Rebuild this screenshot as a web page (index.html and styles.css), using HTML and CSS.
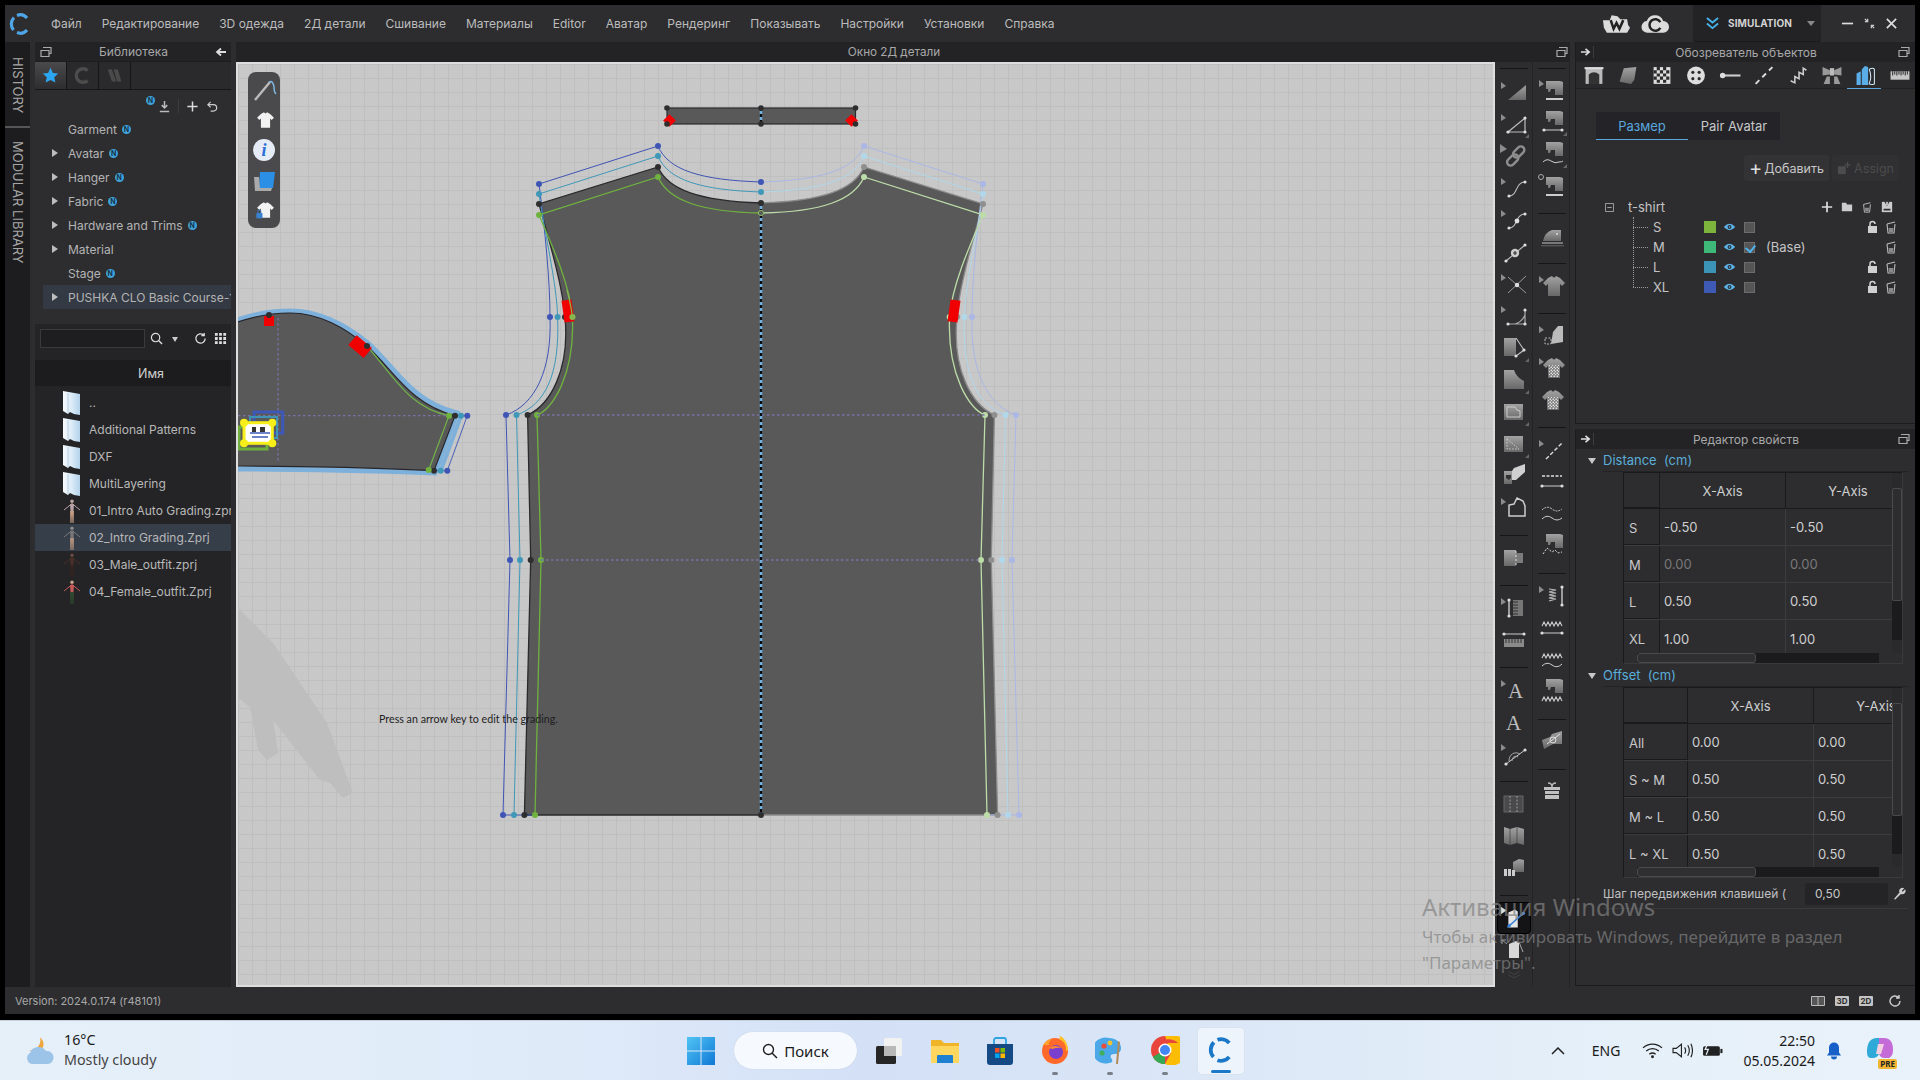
FILE: index.html
```html
<!DOCTYPE html>
<html lang="ru">
<head>
<meta charset="utf-8">
<title>CLO</title>
<link rel="stylesheet" href="styles.css">
</head>
<body>
<svg class="defs" aria-hidden="true">
  <defs>
    <linearGradient id="tg" x1="0" y1="0" x2="0" y2="1"><stop offset="0" stop-color="#a2a2a2"/><stop offset="1" stop-color="#686868"/></linearGradient>
    <linearGradient id="winb" x1="0" y1="0" x2="1" y2="1"><stop offset="0" stop-color="#52c4f4"/><stop offset="1" stop-color="#0f78d6"/></linearGradient>
    <linearGradient id="fold" x1="0" y1="0" x2="1" y2="0"><stop offset="0" stop-color="#f6fafd"/><stop offset=".5" stop-color="#dcecf8"/><stop offset="1" stop-color="#b4d2ea"/></linearGradient>
    <polygon id="fl" points="4,6 9,10 4,13" fill="#8c8c8c"/>
    <polygon id="fc" points="32,26 32,30 28,30" fill="#666"/>
    <path id="mg" d="M11 7h14l3 1v13h-8v-6h-4l-1 3h-2v-3h-2z" fill="url(#tg)"/>
    <path id="ts" d="M12 6l4-2q2 3 4 0l4 2 5 5-3 3-2-2v12H12V12l-2 2-3-3z"/>
    <g id="nd"><circle r="1.6" fill="#ddd"/></g>
    <symbol id="t-tri" viewBox="0 0 34 32"><use href="#fl"/><polygon points="11,24 29,24 29,9" fill="url(#tg)"/></symbol>
    <symbol id="t-triout" viewBox="0 0 34 32"><use href="#fl"/><path d="M11 24H28V10Z" fill="none" stroke="#bbb" stroke-width="1.2"/><use href="#nd" x="11" y="24"/><use href="#nd" x="28" y="24"/><use href="#nd" x="28" y="10"/><use href="#fc"/></symbol>
    <symbol id="t-link" viewBox="0 0 34 32"><polygon points="3,4 10,9 3,13" fill="#8c8c8c"/><g fill="none" stroke="#8e8e8e" stroke-width="2.400"><rect x="9" y="17" width="13" height="7" rx="3.500" transform="rotate(-45 15 20)"/><rect x="15" y="9" width="13" height="7" rx="3.500" transform="rotate(-45 21 12)"/></g></symbol>
    <symbol id="t-s" viewBox="0 0 34 32"><use href="#fl"/><path d="M12 24C21 24 18 10 28 10" fill="none" stroke="#bbb" stroke-width="1.100"/><use href="#nd" x="12" y="24"/><use href="#nd" x="28" y="10"/></symbol>
    <symbol id="t-s2" viewBox="0 0 34 32"><use href="#fl"/><path d="M12 24C21 24 18 10 28 10" fill="none" stroke="#bbb" stroke-width="1.100"/><use href="#nd" x="12" y="24"/><use href="#nd" x="28" y="10"/><circle cx="20" cy="17" r="2.400" fill="#ddd"/></symbol>
    <symbol id="t-plus" viewBox="0 0 34 32"><path d="M9 25L28 9" stroke="#bbb" stroke-width="1.100"/><use href="#nd" x="9" y="25"/><use href="#nd" x="28" y="9"/><circle cx="18" cy="17" r="4.200" fill="#ccc"/><path d="M16 17h4M18 15v4" stroke="#333" stroke-width="1.200"/></symbol>
    <symbol id="t-x" viewBox="0 0 34 32"><use href="#fl"/><path d="M11 25L29 8M11 9L29 25" stroke="#999" stroke-width="1"/><circle cx="20" cy="17" r="2.200" fill="#ddd"/></symbol>
    <symbol id="t-ang" viewBox="0 0 34 32"><use href="#fl"/><path d="M11 24H28V9M18 24C25 22 27 17 28 15" fill="none" stroke="#aaa" stroke-width="1.200"/><use href="#nd" x="11" y="24"/><use href="#nd" x="28" y="24"/><use href="#nd" x="28" y="10"/></symbol>
    <symbol id="t-fold" viewBox="0 0 34 32"><path d="M7 6H19V24H7Z" fill="url(#tg)"/><path d="M19 6L27 18L19 24" fill="none" stroke="#bbb" stroke-width="1.200"/><use href="#nd" x="27" y="18"/><use href="#nd" x="19" y="24"/><use href="#fc"/></symbol>
    <symbol id="t-notch" viewBox="0 0 34 32"><path d="M7 6H17C19 12 23 15 27 17V25H7Z" fill="url(#tg)"/><use href="#fc"/></symbol>
    <symbol id="t-box" viewBox="0 0 34 32"><rect x="7" y="8" width="19" height="16" fill="url(#tg)"/><path d="M10 11h8l2 3 3 1v6H10Z" fill="none" stroke="#ccc"/><use href="#fc"/></symbol>
    <symbol id="t-dot" viewBox="0 0 34 32"><rect x="7" y="8" width="19" height="16" fill="url(#tg)"/><path d="M10 11L22 21H10Z" fill="none" stroke="#ccc" stroke-dasharray="1.500 1.500"/><use href="#fc"/></symbol>
    <symbol id="t-shield" viewBox="0 0 34 32"><path d="M7 11H15V24H7Z" fill="url(#tg)"/><path d="M17 8L28 4V12L19 20H15V11Z" fill="#d0d0d0"/><path d="M9 15h5v3l-2 2-3-2z" fill="#333"/></symbol>
    <symbol id="t-out" viewBox="0 0 34 32"><use href="#fl"/><path d="M12 24V13l5-1 3-6 6 3 2 5v10Z" fill="none" stroke="#ccc" stroke-width="1.500"/></symbol>
    <symbol id="t-split" viewBox="0 0 34 32"><path d="M7 8H19V24H7Z" fill="url(#tg)"/><path d="M19 11H26V21H19Z" fill="#7b7b7b"/><path d="M19 9V24" stroke="#ddd" stroke-dasharray="2 2"/></symbol>
    <symbol id="t-rul" viewBox="0 0 34 32"><use href="#fl"/><path d="M12 8V24" stroke="#ccc" stroke-width="1.400"/><use href="#nd" x="12" y="8"/><use href="#nd" x="12" y="24"/><rect x="16" y="8" width="10" height="16" fill="#777"/><path d="M16 10h5M16 13h5M16 16h5M16 19h5M16 22h5" stroke="#333"/></symbol>
    <symbol id="t-mea" viewBox="0 0 34 32"><path d="M7 10H27" stroke="#ccc"/><use href="#nd" x="7" y="10"/><use href="#nd" x="27" y="10"/><rect x="7" y="15" width="20" height="8" fill="#8a8a8a"/><path d="M9 15v4M12 15v4M15 15v4M18 15v4M21 15v4M24 15v4" stroke="#333"/></symbol>
    <symbol id="t-A" viewBox="0 0 34 32"><use href="#fl"/><text x="11" y="24" class="sv-a">A</text></symbol>
    <symbol id="t-A2" viewBox="0 0 34 32"><text x="9" y="24" class="sv-a">A</text></symbol>
    <symbol id="t-arc" viewBox="0 0 34 32"><use href="#fl"/><path d="M9 26L28 12" stroke="#ccc"/><use href="#nd" x="9" y="26"/><use href="#nd" x="28" y="12"/><path d="M12 23C12 16 18 13 23 16M15 23C15 19 18 17 21 19" fill="none" stroke="#aaa"/></symbol>
    <symbol id="t-grid" viewBox="0 0 34 32"><rect x="7" y="8" width="19" height="16" fill="#4a4a4c" stroke="#666"/><path d="M13 8v16M20 8v16" stroke="#999" stroke-dasharray="2 1.500"/></symbol>
    <symbol id="t-folds" viewBox="0 0 34 32"><path d="M7 7l6 2v16l-6-2zM13 9l7-2v16l-7 2zM20 7l7 2v16l-7-2z" fill="url(#tg)"/><path d="M13 9v16M20 7v16" stroke="#333" stroke-width=".6"/></symbol>
    <symbol id="t-mix" viewBox="0 0 34 32"><path d="M16 10l6-3 5 1v12H16Z" fill="url(#tg)"/><path d="M7 17h3v7H7zM11 17h3v7h-3zM15 18h3v6h-3z" fill="#ccc"/></symbol>
    <symbol id="t-sel" viewBox="0 0 34 32"><polygon points="3,4 9,8 3,12" fill="#ddd"/><path d="M11 10l7-3 3 2v17H11Z" fill="#e6e6e6"/><path d="M10 26L28 10" stroke="#3d85d8" stroke-width="1.600"/><circle cx="12" cy="24" r="1.800" fill="#3d85d8"/><circle cx="27" cy="11" r="1.800" fill="#3d85d8"/></symbol>
    <symbol id="t-sel2" viewBox="0 0 34 32"><path d="M5 6L10 10M5 6h4M5 6v4" stroke="#999"/><path d="M12 10l7-3 3 2v15H12Z" fill="#d8d8d8"/><path d="M22 8l4 10" stroke="#aaa"/></symbol>
    <symbol id="t-chev" viewBox="0 0 34 32"><path d="M7 10l10 5 10-5M7 16l10 5 10-5" fill="none" stroke="#4c4c4c" stroke-width="1.200"/></symbol>
    <symbol id="m-1" viewBox="0 0 34 32"><use href="#fl"/><use href="#mg"/><rect x="11" y="24" width="17" height="2" fill="#ccc"/></symbol>
    <symbol id="m-2" viewBox="0 0 34 32"><use href="#mg" y="-2"/><path d="M9 24H27" stroke="#ccc"/><use href="#nd" x="9" y="24"/><use href="#nd" x="27" y="24"/><use href="#fc"/></symbol>
    <symbol id="m-3" viewBox="0 0 34 32"><use href="#mg" y="-3"/><path d="M8 24q4-4 8-1t8 1q3 0 4-1" fill="none" stroke="#ccc"/><use href="#fc"/></symbol>
    <symbol id="m-4" viewBox="0 0 34 32"><circle cx="6" cy="7" r="2.500" fill="none" stroke="#aaa"/><use href="#mg"/><rect x="11" y="24" width="17" height="2" fill="#ccc"/></symbol>
    <symbol id="m-iron" viewBox="0 0 34 32"><path d="M8 21q2-9 9-11h9v11z" fill="url(#tg)"/><circle cx="22" cy="14" r="1" fill="#ddd"/><rect x="7" y="22" width="21" height="2" fill="#777"/><rect x="6" y="25" width="23" height="1.400" fill="#555"/></symbol>
    <symbol id="m-sh" viewBox="0 0 34 32"><use href="#fl"/><use href="#ts" x="1" y="2" fill="url(#tg)"/></symbol>
    <symbol id="m-pt" viewBox="0 0 34 32"><use href="#fl"/><path d="M16 24l2-12 5-6h5v16z" fill="#bbb"/><path d="M10 18h6v6h-6z" fill="none" stroke="#bbb" stroke-dasharray="2 1.500"/></symbol>
    <symbol id="m-ck" viewBox="0 0 34 32"><use href="#fl"/><use href="#ts" x="1" y="2" fill="url(#tg)"/><rect x="14" y="13" width="10" height="12" fill="#ddd"/><path d="M14 15h10M14 18h10M14 21h10M14 24h10M16 13v12M19 13v12M22 13v12" stroke="#333" stroke-dasharray="1.500 1.500"/></symbol>
    <symbol id="m-ck2" viewBox="0 0 34 32"><use href="#ts" y="2" fill="url(#tg)"/><rect x="13" y="13" width="10" height="12" fill="#ddd"/><path d="M13 15h10M13 18h10M13 21h10M13 24h10M15 13v12M18 13v12M21 13v12" stroke="#333" stroke-dasharray="1.500 1.500"/></symbol>
    <symbol id="m-ln" viewBox="0 0 34 32"><use href="#fl"/><path d="M11 25L27 9" stroke="#ddd" stroke-width="1.400" stroke-dasharray="4 2"/></symbol>
    <symbol id="m-dd" viewBox="0 0 34 32"><path d="M7 10h20" stroke="#ddd" stroke-width="1.400" stroke-dasharray="3 1.500"/><path d="M7 20h20" stroke="#ccc"/><use href="#nd" x="7" y="20"/><use href="#nd" x="27" y="20"/></symbol>
    <symbol id="m-wv" viewBox="0 0 34 32"><path d="M7 12q5-5 10-1t10 0" fill="none" stroke="#ccc" stroke-dasharray="2 1"/><path d="M7 21q5-5 10-1t10 0" fill="none" stroke="#ccc"/></symbol>
    <symbol id="m-ma" viewBox="0 0 34 32"><use href="#mg" y="-3"/><path d="M8 24l4-6 5 4 3-2 3 3 4-1" fill="none" stroke="#ddd" stroke-dasharray="2 1.500"/></symbol>
    <symbol id="m-sp" viewBox="0 0 34 32"><use href="#fl"/><path d="M27 7V25" stroke="#ccc" stroke-width="1.400"/><use href="#nd" x="27" y="7"/><use href="#nd" x="27" y="25"/><path d="M14 9l7 1-7 2 7 1-7 2 7 1-7 2 7 1-7 2" fill="none" stroke="#bbb" stroke-width="1.200"/></symbol>
    <symbol id="m-sa" viewBox="0 0 34 32"><path d="M7 14l2-4 2 4 2-4 2 4 2-4 2 4 2-4 2 4 2-4 2 4" fill="none" stroke="#ccc" stroke-width="1.100"/><path d="M7 21H27" stroke="#ccc"/><use href="#nd" x="7" y="21"/><use href="#nd" x="27" y="21"/></symbol>
    <symbol id="m-sb" viewBox="0 0 34 32"><path d="M7 14l2-4 2 4 2-4 2 4 2-4 2 4 2-4 2 4 2-4 2 4" fill="none" stroke="#ccc" stroke-width="1.100"/><path d="M7 22q5-5 10-1t10-1" fill="none" stroke="#ccc"/></symbol>
    <symbol id="m-mz" viewBox="0 0 34 32"><use href="#mg" y="-4"/><path d="M7 25l2-4 2 4 2-4 2 4 2-4 2 4 2-4 2 4 2-4 2 4" fill="none" stroke="#ccc" stroke-width="1.100"/></symbol>
    <symbol id="m-tx" viewBox="0 0 34 32"><path d="M7 14l8-3 2-3 10-3v13H18l-9 5z" fill="url(#tg)"/><path d="M12 18L25 8" stroke="#ddd"/><circle cx="18" cy="14" r="3" fill="none" stroke="#ddd"/></symbol>
    <symbol id="m-gift" viewBox="0 0 34 32"><path d="M9 11h16v3H9zM10 15h14v3H10zM10 19h14v4H10zM17 11v12" fill="#c0c0c0"/><path d="M13 7q4 0 4 4q0-4 4-4" fill="none" stroke="#bbb" stroke-width="1.400"/></symbol>
    <symbol id="o-1" viewBox="0 0 20 20"><rect x="2" y="3" width="16" height="15" fill="#bbb"/><path d="M5 18v-9q5-4 10 0v9z" fill="#333"/><rect x="1" y="2" width="18" height="2" fill="#ddd"/></symbol>
    <symbol id="o-2" viewBox="0 0 20 20"><path d="M6 3l12-1-2 12-3 4-11-2z" fill="url(#tg)"/></symbol>
    <symbol id="o-3" viewBox="0 0 20 20"><rect x="2" y="2" width="16" height="16" fill="#ddd"/><path d="M2 5h3v3H2zM8 5h3v3H8zM14 5h3v3h-3zM5 8h3v3H5zM11 8h3v3h-3zM2 11h3v3H2zM8 11h3v3H8zM14 11h3v3h-3zM5 14h3v3H5zM11 14h3v3h-3zM5 2h3v3H5zM11 2h3v3h-3z" fill="#2b2b2b"/></symbol>
    <symbol id="o-4" viewBox="0 0 20 20"><circle cx="10" cy="10" r="8.500" fill="#ddd"/><g fill="#2b2b2b"><circle cx="7" cy="7" r="1.500"/><circle cx="13" cy="7" r="1.500"/><circle cx="7" cy="13" r="1.500"/><circle cx="13" cy="13" r="1.500"/></g></symbol>
    <symbol id="o-5" viewBox="0 0 20 20"><rect x="5" y="9" width="15" height="2" fill="#ccc"/><circle cx="3" cy="10" r="2.600" fill="#ddd"/></symbol>
    <symbol id="o-6" viewBox="0 0 20 20"><path d="M2 18L18 2" stroke="#ddd" stroke-width="1.800" stroke-dasharray="5 4"/></symbol>
    <symbol id="o-7" viewBox="0 0 20 20"><path d="M3 15l4 2 0-6 4 2 0-6 4 2 0-6 3 2" fill="none" stroke="#ccc" stroke-width="1.500"/></symbol>
    <symbol id="o-8" viewBox="0 0 20 20"><path d="M1 2l7 3v4l-7 1zM19 2l-7 3v4l7 1zM2 18l3-7h3v7zM18 18l-3-7h-3v7z" fill="#999"/><rect x="8" y="3" width="4" height="7" fill="#bbb"/></symbol>
    <symbol id="o-9" viewBox="0 0 20 20"><path d="M1 8l4-2v13H1zM6 4l3-3 3 1v17H6z" fill="#5aaee8"/><path d="M13 4q4-2 5 0v14q-3 1-5 0q3-7 0-14" fill="none" stroke="#cfe6f5"/></symbol>
    <symbol id="o-10" viewBox="0 0 20 20"><rect x="1" y="6" width="18" height="8" fill="#c6c6c6"/><path d="M3 6v4M5 6v3M7 6v4M9 6v3M11 6v4M13 6v3M15 6v4M17 6v3" stroke="#333"/></symbol>
    <symbol id="eye" viewBox="0 0 16 12"><path d="M1 6q7-8 14 0q-7 8-14 0z" fill="#5db4ea"/><circle cx="8" cy="6" r="2.400" fill="#2d2d30"/><circle cx="8" cy="6" r="1" fill="#5db4ea"/></symbol>
    <symbol id="lock" viewBox="0 0 12 14"><rect x="1" y="6" width="9" height="7" fill="#d0d0d0"/><path d="M3 6V4a2.500 2.500 0 0 1 5 0" fill="none" stroke="#d0d0d0" stroke-width="1.500"/></symbol>
    <symbol id="bin" viewBox="0 0 12 14"><path d="M2 4l8-2M2 4l1 9h6l1-9" fill="none" stroke="#bbb" stroke-width="1.100"/><path d="M3.600 8h4.800l-.4 4H4z" fill="#888"/></symbol>
    <symbol id="folder" viewBox="0 0 18 24" preserveAspectRatio="none"><path d="M0 0L17 3V24L11 23 7 21 5 23 0 20Z" fill="url(#fold)"/><path d="M5 2V22" stroke="#a8c4dc" stroke-width=".8"/></symbol>
    <symbol id="fig" viewBox="0 0 18 24"><circle cx="9" cy="2.200" r="1.800" fill="var(--head,#b9a09a)"/><path d="M9 4.500L1 11M9 4.500l8 6.500" stroke="var(--top,#b8a0a6)" stroke-width="1" fill="none"/><path d="M7 5h4l-.5 7h-3z" fill="var(--top,#b8a0a6)"/><path d="M7 12h4l-.4 12H9.500L9 15l-.5 9H7.400z" fill="var(--leg,#c09a80)"/></symbol>
    <g id="half">
      <path class="bf" d="M761 203C700 201 668 190 658 167L539 204C552 250 563 290 565 317C570 370 550 405 527.600 415L530.700 560L524.400 815H761Z"/>
      <path class="lk" d="M761 203C700 201 668 190 658 167L539 204C552 250 563 290 565 317C570 370 550 405 527.600 415L530.700 560L524.400 815H761"/>
      <path class="lb" d="M761 182C700 180 668 170 658 146L539 184C545 230 550 280 550 317C552 370 535 405 506 415L510 560L503 815H535"/>
      <path class="lt" d="M761 192C700 190 668 180 658 156L539 194C545 235 557 285 557.600 317C560 375 545 405 516.500 415L520 560L514 815"/>
      <path class="lg" d="M761 213C700 212 668 200 658 177L539 215C552 245 570 285 572.400 317C575 375 552 410 537 415L541 560L535 815"/>
      <g class="db"><circle cx="539" cy="184" r="3"/><circle cx="658" cy="146" r="3"/><circle cx="550" cy="317" r="3"/><circle cx="506" cy="415" r="3"/><circle cx="510" cy="560" r="3"/><circle cx="503" cy="815" r="3"/></g>
      <g class="dt"><circle cx="539" cy="194" r="3"/><circle cx="658" cy="156" r="3"/><circle cx="557.600" cy="317" r="3"/><circle cx="516.500" cy="415" r="3"/><circle cx="520" cy="560" r="3"/><circle cx="514" cy="815" r="3"/></g>
      <g class="dk"><circle cx="539" cy="204" r="3"/><circle cx="658" cy="167" r="3"/><circle cx="565" cy="317" r="3"/><circle cx="527.600" cy="415" r="3"/><circle cx="530.700" cy="560" r="3"/><circle cx="524.400" cy="815" r="3"/></g>
      <g class="dg"><circle cx="539" cy="215" r="3"/><circle cx="658" cy="177" r="3"/><circle cx="572.400" cy="317" r="3"/><circle cx="537" cy="415" r="3"/><circle cx="541" cy="560" r="3"/><circle cx="535" cy="815" r="3"/></g>
    </g>
  </defs>
</svg>

<div class="screen">
  <div class="app">
    <header class="menubar">
      <svg class="logo" viewBox="0 0 22 22"><g fill="none" stroke="#4ea6e6" stroke-width="3.200"><path d="M18 5A9 9 0 0 0 8 2.400"/><path d="M5 4.600A9 9 0 0 0 4.600 17"/><path d="M8 19.600A9 9 0 0 0 18 17"/></g></svg>
      <nav class="menu">
        <span>Файл</span><span>Редактирование</span><span>3D одежда</span><span>2Д детали</span><span>Сшивание</span><span>Материалы</span><span>Editor</span><span>Аватар</span><span>Рендеринг</span><span>Показывать</span><span>Настройки</span><span>Установки</span><span>Справка</span>
      </nav>
      <div class="mb-right">
        <svg class="mb-cloud" viewBox="0 0 30 22"><path d="M1 7h7l2-5 6 1 3 3h7l1 6 2 3-3 5H5l-3-5z" fill="#dcdcdc"/><path d="M9 7l3 9 3-6 3 6 4-9" fill="none" stroke="#222" stroke-width="2.600"/></svg>
        <svg class="mb-cloud2" viewBox="0 0 30 22"><path d="M7 20a6 6 0 0 1-1-12 9 9 0 0 1 17 0 6 6 0 0 1 0 12z" fill="#dcdcdc"/><path d="M20 9a6 6 0 1 0 0 6" fill="none" stroke="#222" stroke-width="2.600"/></svg>
        <div class="sim">
          <svg class="sim-ch" viewBox="0 0 14 14"><path d="M1 1l6 5 6-5M1 7l6 5 6-5" fill="none" stroke="#45b2ea" stroke-width="2"/></svg>
          <span class="sim-t">SIMULATION</span>
          <span class="sim-c"></span>
        </div>
        <div class="win">
          <svg viewBox="0 0 14 14"><path d="M1 7h12" stroke="#ddd" stroke-width="1.800"/></svg>
          <svg viewBox="0 0 14 14"><path d="M2 2l3 3M5 2v3H2M12 12L9 9M9 12V9h3" fill="none" stroke="#ccc" stroke-width="1.400"/></svg>
          <svg viewBox="0 0 14 14"><path d="M2 2l10 10M12 2L2 12" stroke="#ddd" stroke-width="1.800"/></svg>
        </div>
      </div>
    </header>

    <div class="workspace">
      <aside class="vtabs">
        <div class="vtab vt-a">HISTORY</div>
        <div class="vtab vt-b">MODULAR LIBRARY</div>
      </aside>

      <section class="library">
        <div class="phead lib-head">
          <svg class="pop" viewBox="0 0 12 12"><path d="M3 1.500h8v6H9M1 4.500h8v6H1z" fill="none" stroke="#aaa" stroke-width="1.200"/></svg>
          <span class="ptitle">Библиотека</span>
          <svg class="arr" viewBox="0 0 12 12"><path d="M11 6H3M6 2.500L2 6l4 3.500" fill="none" stroke="#ddd" stroke-width="1.800"/></svg>
        </div>
        <div class="lib-tabs">
          <div class="ltab on"><svg viewBox="0 0 20 20"><path d="M10 1l2.800 6 6.200.700-4.600 4.300 1.300 6.300L10 15.200l-5.700 3.100 1.300-6.300L1 7.700 7.200 7z" fill="#2da6f2"/></svg></div>
          <div class="ltab"><svg viewBox="0 0 20 20"><path d="M16 4A8 8 0 1 0 16 16" fill="none" stroke="#4c4c4c" stroke-width="4"/></svg></div>
          <div class="ltab"><svg viewBox="0 0 20 20"><path d="M2 3l5 0 5 14H7zM9 3h5l4 14h-5z" fill="#4a4a4a"/></svg></div>
        </div>
        <div class="lib-tools">
          <span class="nb nb-top">N</span>
          <svg viewBox="0 0 14 14"><path d="M7 1v7M4 5.500l3 3 3-3M2 12.500h10" fill="none" stroke="#bbb" stroke-width="1.600"/></svg>
          <span class="vl"></span>
          <svg viewBox="0 0 14 14"><path d="M7 1.500v11M1.500 7h11" stroke="#ddd" stroke-width="1.600"/></svg>
          <svg viewBox="0 0 14 14"><path d="M5 2L2 5l3 3M2 5h6a3.500 3.500 0 0 1 0 7H5" fill="none" stroke="#ccc" stroke-width="1.300"/></svg>
        </div>
        <ul class="lib-tree">
          <li><i></i>Garment<span class="nb">N</span></li>
          <li><i class="ar"></i>Avatar<span class="nb">N</span></li>
          <li><i class="ar"></i>Hanger<span class="nb">N</span></li>
          <li><i class="ar"></i>Fabric<span class="nb">N</span></li>
          <li><i class="ar"></i>Hardware and Trims<span class="nb">N</span></li>
          <li><i class="ar"></i>Material</li>
          <li><i></i>Stage<span class="nb">N</span></li>
          <li class="sel"><i class="ar"></i><span class="clip">PUSHKA CLO Basic Course-1</span></li>
        </ul>
        <div class="lib-lower">
          <div class="searchrow">
            <span class="sinput"></span>
            <svg viewBox="0 0 14 14"><circle cx="6" cy="6" r="4.500" fill="none" stroke="#ddd" stroke-width="1.300"/><path d="M9.500 9.500l3.500 3.500" stroke="#ddd" stroke-width="1.500"/></svg>
            <i class="dd"></i>
            <svg viewBox="0 0 14 14"><path d="M12 7a5 5 0 1 1-1.600-3.700M11 1v3H8" fill="none" stroke="#ddd" stroke-width="1.400"/></svg>
            <svg viewBox="0 0 14 14"><path d="M1 1h3v3H1zM5.500 1h3v3h-3zM10 1h3v3h-3zM1 5.500h3v3H1zM5.500 5.500h3v3h-3zM10 5.500h3v3h-3zM1 10h3v3H1zM5.500 10h3v3h-3zM10 10h3v3h-3z" fill="#ddd"/></svg>
          </div>
          <div class="colhead">Имя</div>
          <ul class="files">
            <li><svg><use href="#folder"/></svg><span>..</span></li>
            <li><svg><use href="#folder"/></svg><span>Additional Patterns</span></li>
            <li><svg><use href="#folder"/></svg><span>DXF</span></li>
            <li><svg><use href="#folder"/></svg><span>MultiLayering</span></li>
            <li><svg><use href="#fig"/></svg><span class="clip">01_Intro Auto Grading.zprj</span></li>
            <li class="sel"><svg class="f2"><use href="#fig"/></svg><span>02_Intro Grading.Zprj</span></li>
            <li><svg class="f3"><use href="#fig"/></svg><span>03_Male_outfit.zprj</span></li>
            <li><svg class="f4"><use href="#fig"/></svg><span>04_Female_outfit.Zprj</span></li>
          </ul>
        </div>
      </section>

      <section class="view">
        <div class="phead view-head">
          <span class="ptitle">Окно 2Д детали</span>
          <svg class="pop" viewBox="0 0 12 12"><path d="M3 1.500h8v6H9M1 4.500h8v6H1z" fill="none" stroke="#aaa" stroke-width="1.200"/></svg>
        </div>
        <div class="view-body">
          <div class="canvas">
            <svg class="pattern" viewBox="236 62 1259 925">
              <path class="ghost" d="M237 607L273 643L327 723L353 793L343 798L330 783L320 780L273 720L278 753L267 760L258 750L250 707L237 697Z"/>

              <path class="sl-blue" d="M238 320C255 314 275 311 290 311C320 311 347 326 369 344C397 370 412 402 457 413L435 473C380 471 300 469 238 469"/>
              <path class="body-fill" d="M238 322C255 316 275 313 290 313C320 313 345 328 367 346C395 372 410 404 455 415.700L434 470.700C380 468 300 466 238 466Z"/>
              <path class="sl-black" d="M238 322C255 316 275 313 290 313C320 313 345 328 367 346C395 372 410 404 455 415.700L434 470.700C380 468 300 466 238 466"/>
              <path class="sl-green" d="M367 346C395 378 410 408 449 415.700L428.700 470"/>
              <path class="sl-tt" d="M461 415.700L440.700 470.700"/>
              <path class="sl-tl" d="M455 415.700H467.300L447.300 470.700H434"/>
              <path class="hdash" d="M238 415.700H449M278 318V463"/>
              <rect class="red" x="264" y="316" width="10" height="10"/>
              <rect class="red" x="350" y="340" width="20" height="13" transform="rotate(40 360 346.700)"/>
              <rect class="sq-b" x="254" y="412" width="28.700" height="21"/>
              <rect class="sq-t" x="250" y="417" width="27" height="21"/>
              <rect class="sq-g" x="239" y="427" width="28" height="22"/>
              <rect class="sq-y" x="244" y="422.700" width="28.300" height="20.600"/>
              <path class="sq-in" d="M252 427h4v5h-4zM260 427h5v5h-5z"/>
              <path class="sq-blue" d="M250 433H270M252 437H268"/>
              <g class="yd"><circle cx="244" cy="422.700" r="4"/><circle cx="272.300" cy="422.700" r="4"/><circle cx="244" cy="443.300" r="4"/><circle cx="272.300" cy="443.300" r="4"/></g>
              <g class="dk"><circle cx="269" cy="315" r="3"/><circle cx="367" cy="346" r="3"/><circle cx="455" cy="415.700" r="3"/><circle cx="434" cy="470.700" r="3"/></g>
              <g class="dg"><circle cx="449" cy="415.700" r="3"/><circle cx="428.700" cy="470" r="3"/></g>
              <g class="dt"><circle cx="461" cy="415.700" r="3"/><circle cx="440.700" cy="470.700" r="3"/></g>
              <g class="db"><circle cx="467.300" cy="415.700" r="3"/><circle cx="447.300" cy="470.700" r="3"/></g>

              <g class="pal-r"><use href="#half" transform="translate(1522 0) scale(-1 1)"/></g>
              <g class="pal-l"><use href="#half"/></g>
              <path class="hdash" d="M537 415H985M541 560H981"/>
              <rect class="red" x="563" y="300" width="10" height="22" transform="rotate(-8 568 311)"/>
              <rect class="red" x="949" y="300" width="10" height="22" transform="rotate(8 954 311)"/>
              <path class="sm-g" d="M567 290Q571 305 572.400 317"/>
              <circle class="dt-g" cx="572.400" cy="317" r="3"/>
              <path class="cl-blue" d="M761 203V815"/>
              <path class="cl-black" d="M761 203V815"/>
              <g class="dk"><circle cx="761" cy="203" r="3"/><circle cx="761" cy="815" r="3"/></g>
              <circle class="db-s" cx="761" cy="182" r="3"/>
              <circle class="dt-s" cx="761" cy="192" r="3"/>
              <circle class="dg-o" cx="761" cy="213" r="2.600"/>

              <rect class="collar" x="667" y="108" width="188.500" height="16"/>
              <path class="cl-blue" d="M761 108V124"/>
              <path class="cl-black" d="M761 108V124"/>
              <rect class="red" x="665" y="116" width="9" height="9" transform="rotate(45 669.500 120.500)"/>
              <rect class="red" x="847" y="116" width="9" height="9" transform="rotate(45 851.500 120.500)"/>
              <g class="dk"><circle cx="667" cy="108" r="2.800"/><circle cx="855.500" cy="108" r="2.800"/><circle cx="667" cy="124" r="2.800"/><circle cx="855.500" cy="124" r="2.800"/><circle cx="761" cy="108" r="2.800"/><circle cx="761" cy="124" r="2.800"/></g>
              <text class="tip" x="379" y="723">Press an arrow key to edit the grading.</text>
            </svg>
            <div class="pill">
              <svg viewBox="0 0 26 26"><path d="M4 23L19 5" stroke="#bbb" stroke-width="2.400"/><path d="M18 5q4-2 5 5 0 5 2 7" fill="none" stroke="#7db7e2" stroke-width="1.500"/></svg>
              <svg viewBox="0 0 34 32"><use href="#ts" fill="#f2f2f2" x="1" y="2"/></svg>
              <svg viewBox="0 0 26 26"><circle cx="13" cy="13" r="11" fill="#e6ecf6"/><text x="13" y="19" class="sv-i">i</text></svg>
              <svg viewBox="0 0 26 26"><path d="M9 5h15l-2 16H8z" fill="#2b8fe6"/><path d="M3 10h5l1 11h12l-1 3H4z" fill="#aaa"/></svg>
              <svg viewBox="0 0 34 32"><use href="#ts" fill="#f2f2f2" x="1" y="2"/><rect x="7" y="20" width="8" height="7" fill="#3a82d0"/><path d="M9 20v-2a2 2 0 0 1 4 0v2" fill="none" stroke="#3a82d0"/></svg>
            </div>
          </div>
          <div class="toolcols">
            <div class="toolcol tc-l">
              <hr class="tsep first">
              <svg class="tool"><use href="#t-tri"/></svg><svg class="tool"><use href="#t-triout"/></svg><svg class="tool"><use href="#t-link"/></svg><svg class="tool"><use href="#t-s"/></svg><svg class="tool"><use href="#t-s2"/></svg><svg class="tool"><use href="#t-plus"/></svg><svg class="tool"><use href="#t-x"/></svg><svg class="tool"><use href="#t-ang"/></svg><svg class="tool"><use href="#t-fold"/></svg><svg class="tool"><use href="#t-notch"/></svg><svg class="tool"><use href="#t-box"/></svg><svg class="tool"><use href="#t-dot"/></svg><svg class="tool"><use href="#t-shield"/></svg><svg class="tool"><use href="#t-out"/></svg>
              <hr class="tsep">
              <svg class="tool"><use href="#t-split"/></svg>
              <hr class="tsep">
              <svg class="tool"><use href="#t-rul"/></svg><svg class="tool"><use href="#t-mea"/></svg>
              <hr class="tsep">
              <svg class="tool"><use href="#t-A"/></svg><svg class="tool"><use href="#t-A2"/></svg><svg class="tool"><use href="#t-arc"/></svg>
              <hr class="tsep">
              <svg class="tool"><use href="#t-grid"/></svg><svg class="tool"><use href="#t-folds"/></svg><svg class="tool"><use href="#t-mix"/></svg>
              <hr class="tsep">
              <svg class="tool active"><use href="#t-sel"/></svg><svg class="tool"><use href="#t-sel2"/></svg><svg class="tool short"><use href="#t-chev"/></svg>
            </div>
            <div class="toolcol tc-r">
              <hr class="tsep first">
              <svg class="tool"><use href="#m-1"/></svg><svg class="tool"><use href="#m-2"/></svg><svg class="tool"><use href="#m-3"/></svg><svg class="tool"><use href="#m-4"/></svg>
              <hr class="tsep">
              <svg class="tool"><use href="#m-iron"/></svg>
              <hr class="tsep">
              <svg class="tool"><use href="#m-sh"/></svg>
              <hr class="tsep">
              <svg class="tool"><use href="#m-pt"/></svg><svg class="tool"><use href="#m-ck"/></svg><svg class="tool"><use href="#m-ck2"/></svg>
              <hr class="tsep">
              <svg class="tool"><use href="#m-ln"/></svg><svg class="tool"><use href="#m-dd"/></svg><svg class="tool"><use href="#m-wv"/></svg><svg class="tool"><use href="#m-ma"/></svg>
              <hr class="tsep">
              <svg class="tool"><use href="#m-sp"/></svg><svg class="tool"><use href="#m-sa"/></svg><svg class="tool"><use href="#m-sb"/></svg><svg class="tool"><use href="#m-mz"/></svg>
              <hr class="tsep">
              <svg class="tool"><use href="#m-tx"/></svg>
              <hr class="tsep">
              <svg class="tool"><use href="#m-gift"/></svg>
            </div>
          </div>
        </div>
      </section>

      <aside class="rightcol">
        <section class="objects">
          <div class="phead obj-head">
            <svg class="arr" viewBox="0 0 12 12"><path d="M1 6h8M6 2.500L10 6l-4 3.500" fill="none" stroke="#ddd" stroke-width="1.800"/></svg>
            <span class="ptitle">Обозреватель объектов</span>
            <svg class="pop" viewBox="0 0 12 12"><path d="M3 1.500h8v6H9M1 4.500h8v6H1z" fill="none" stroke="#aaa" stroke-width="1.200"/></svg>
          </div>
          <div class="obj-icons">
            <svg><use href="#o-1"/></svg><svg><use href="#o-2"/></svg><svg><use href="#o-3"/></svg><svg><use href="#o-4"/></svg><svg><use href="#o-5"/></svg><svg><use href="#o-6"/></svg><svg><use href="#o-7"/></svg><svg><use href="#o-8"/></svg><svg class="on"><use href="#o-9"/></svg><svg><use href="#o-10"/></svg>
          </div>
          <div class="subtabs">
            <span class="on">Размер</span><span>Pair Avatar</span>
          </div>
          <div class="obj-btns">
            <button class="btn"><b>+</b>Добавить</button>
            <button class="btn off"><svg viewBox="0 0 16 16"><path d="M1 6h9v9H1z" fill="#4c4c4c"/><path d="M12 1v7M8.500 4.500h7" stroke="#4c4c4c" stroke-width="1.500"/></svg>Assign</button>
          </div>
          <div class="sizes">
            <div class="s-row s-top">
              <svg class="minus" viewBox="0 0 10 10"><path d="M.5.500h9v9h-9zM2.500 5h5" fill="none" stroke="#aaa"/></svg>
              <span class="s-name top">t-shirt</span>
              <span class="s-acts">
                <svg viewBox="0 0 14 14"><path d="M7 1v12M1 7h12" stroke="#ddd" stroke-width="2"/></svg>
                <svg viewBox="0 0 14 14"><path d="M1 2h5l1 2h6v8H1z" fill="#ccc"/></svg>
                <svg viewBox="0 0 12 14"><use href="#bin"/></svg>
                <svg viewBox="0 0 14 14"><path d="M1 1h12v12H1z" fill="#ccc"/><path d="M4 1h2v4h2V1h2l-3 5zM3 9h8v2H3z" fill="#2d2d30"/></svg>
              </span>
            </div>
            <div class="s-row"><span class="s-name">S</span><i class="sw c-s"></i><svg class="eye"><use href="#eye"/></svg><i class="ck"></i><span class="s-base"></span><span class="s-lk"><svg><use href="#lock"/></svg><svg><use href="#bin"/></svg></span></div>
            <div class="s-row"><span class="s-name">M</span><i class="sw c-m"></i><svg class="eye"><use href="#eye"/></svg><i class="ck on"></i><span class="s-base">(Base)</span><span class="s-lk"><svg class="ghosted"><use href="#lock"/></svg><svg><use href="#bin"/></svg></span></div>
            <div class="s-row"><span class="s-name">L</span><i class="sw c-l"></i><svg class="eye"><use href="#eye"/></svg><i class="ck"></i><span class="s-base"></span><span class="s-lk"><svg><use href="#lock"/></svg><svg><use href="#bin"/></svg></span></div>
            <div class="s-row"><span class="s-name">XL</span><i class="sw c-xl"></i><svg class="eye"><use href="#eye"/></svg><i class="ck"></i><span class="s-base"></span><span class="s-lk"><svg><use href="#lock"/></svg><svg><use href="#bin"/></svg></span></div>
          </div>
        </section>
        <section class="props">
          <div class="phead obj-head">
            <svg class="arr" viewBox="0 0 12 12"><path d="M1 6h8M6 2.500L10 6l-4 3.500" fill="none" stroke="#ddd" stroke-width="1.800"/></svg>
            <span class="ptitle">Редактор свойств</span>
            <svg class="pop" viewBox="0 0 12 12"><path d="M3 1.500h8v6H9M1 4.500h8v6H1z" fill="none" stroke="#aaa" stroke-width="1.200"/></svg>
          </div>
          <div class="sect"><i class="sect-ar"></i><span>Distance&nbsp;&nbsp;(cm)</span></div>
          <div class="gt gt-d">
            <div class="gt-main">
              <div class="gr gh"><span></span><span>X-Axis</span><span>Y-Axis</span></div>
              <div class="gr"><span>S</span><span>-0.50</span><span>-0.50</span></div>
              <div class="gr dim"><span>M</span><span>0.00</span><span>0.00</span></div>
              <div class="gr"><span>L</span><span>0.50</span><span>0.50</span></div>
              <div class="gr lastr"><span>XL</span><span>1.00</span><span>1.00</span></div>
            </div>
            <div class="vsb"><i></i></div>
            <div class="hsb"><i></i></div>
          </div>
          <div class="sect s2"><i class="sect-ar"></i><span>Offset&nbsp;&nbsp;(cm)</span></div>
          <div class="gt gt-o">
            <div class="gt-main">
              <div class="gr gh"><span></span><span>X-Axis</span><span>Y-Axis</span></div>
              <div class="gr"><span>All</span><span>0.00</span><span>0.00</span></div>
              <div class="gr"><span>S ~ M</span><span>0.50</span><span>0.50</span></div>
              <div class="gr"><span>M ~ L</span><span>0.50</span><span>0.50</span></div>
              <div class="gr lastr"><span>L ~ XL</span><span>0.50</span><span>0.50</span></div>
            </div>
            <div class="vsb"><i></i></div>
            <div class="hsb"><i></i></div>
          </div>
          <div class="stepr">
            <span class="st-l">Шаг передвижения клавишей (</span>
            <span class="st-in">0,50</span>
            <svg viewBox="0 0 14 14"><path d="M1 13l6-7a3.500 3.500 0 0 1 5-4.500l-2.500 2.500 1 1L13 2.500a3.500 3.500 0 0 1-4.500 5L2.500 13.500z" fill="#ccc"/></svg>
          </div>
        </section>
      </aside>
    </div>

    <footer class="status">
      <span class="ver">Version: 2024.0.174 (r48101)</span>
      <div class="st-icons">
        <svg class="st-split" viewBox="0 0 14 10"><path d="M.5.500h13v9H.5zM7 .500v9" fill="#555" stroke="#bbb"/></svg>
        <span class="st-b">3D</span>
        <span class="st-b">2D</span>
        <svg class="st-ref" viewBox="0 0 14 14"><path d="M12 7a5 5 0 1 1-1.600-3.700M11 1v3H8" fill="none" stroke="#ccc" stroke-width="1.400"/></svg>
      </div>
    </footer>
  </div>

  <div class="taskbar">
    <div class="weather">
      <svg viewBox="0 0 32 30"><path d="M16 1a10 10 0 0 1-11 13q7 3 13-1 4-6-2-12z" fill="#f0a63c"/><path d="M8 28a6 6 0 0 1-2-11 9 9 0 0 1 16-2 6.500 6.500 0 0 1 2 13z" fill="#9cc4e8"/></svg>
      <div class="w-t"><span>16°C</span><span class="w-s">Mostly cloudy</span></div>
    </div>
    <div class="tb-center">
      <svg class="tb-i start" viewBox="0 0 30 30"><path d="M1 1h13.500v13.500H1zM15.500 1H29v13.500H15.500zM1 15.500h13.500V29H1zM15.500 15.500H29V29H15.500z" fill="url(#winb)"/></svg>
      <div class="search"><svg viewBox="0 0 16 16"><circle cx="6.500" cy="6.500" r="5" fill="none" stroke="#222" stroke-width="1.400"/><path d="M10 10l5 5" stroke="#222" stroke-width="1.500"/></svg><span>Поиск</span></div>
      <svg class="tb-i" viewBox="0 0 30 30"><rect x="2" y="10" width="20" height="18" rx="1.500" fill="#262626"/><rect x="10" y="2" width="18" height="18" rx="1.500" fill="#f2f2f2"/><rect x="10" y="10" width="12" height="10" fill="#b8b8b8"/></svg>
      <svg class="tb-i" viewBox="0 0 30 30"><path d="M1 4h10l3 3h15v20H1z" fill="#f0b429"/><path d="M1 10h28v17H1z" fill="#ffd75e"/><path d="M7 27v-7q0-1 1-1h14q1 0 1 1v7z" fill="#1f7fd0"/></svg>
      <svg class="tb-i" viewBox="0 0 30 30"><path d="M2 8h26v18a3 3 0 0 1-3 3H5a3 3 0 0 1-3-3z" fill="#164a84"/><path d="M9 8V4a2 2 0 0 1 2-2h8a2 2 0 0 1 2 2v4" fill="none" stroke="#2fa3e0" stroke-width="1.800"/><path d="M10 12h4.500v4.500H10z" fill="#f25022"/><path d="M15.500 12H20v4.500h-4.500z" fill="#7fba00"/><path d="M10 17.500h4.500V22H10z" fill="#00a4ef"/><path d="M15.500 17.500H20V22h-4.500z" fill="#ffb900"/></svg>
      <div class="tb-w"><svg class="tb-i" viewBox="0 0 30 30"><circle cx="15" cy="16" r="13" fill="#ff6a2b"/><path d="M26 16a11 11 0 0 0-7-12q2-2 0-4 9 5 9 15z" fill="#ffc028"/><path d="M3 10q3-5 9-6-4 3-3 6z" fill="#ffa32a"/><circle cx="16" cy="17" r="7" fill="#7b3fd0"/><path d="M9 13q6-4 13 0-6-1-9 1z" fill="#ff8a2c"/></svg><i class="pip"></i></div>
      <div class="tb-w"><svg class="tb-i" viewBox="0 0 30 30"><path d="M14 3a13 13 0 1 0 0 25c4 0 4-3 2-5-1-2 0-4 3-4 4 0 7-2 7-6 0-6-6-10-12-10z" fill="#4aa8e8"/><circle cx="9" cy="11" r="2.600" fill="#e74c3c"/><circle cx="15" cy="8" r="2.400" fill="#f2c230"/><circle cx="7" cy="18" r="2.600" fill="#3fae5d"/><path d="M23 6l2 1-2 22h-2z" fill="#b08a5a"/></svg><i class="pip"></i></div>
      <div class="tb-w"><svg class="tb-i" viewBox="0 0 30 30"><circle cx="15" cy="15" r="14" fill="#e8453c"/><path d="M15 15L3 22A14 14 0 0 0 15 29z" fill="#34a853"/><path d="M15 1h13a14 14 0 0 1-13 28l6-11z" fill="#fbbc05"/><path d="M3 22L9 8A14 14 0 0 1 28 8H15z" fill="#e8453c"/><path d="M15 29a14 14 0 0 1-12-7l7-4 5 4z" fill="#34a853"/><circle cx="15" cy="15" r="6.500" fill="#fff"/><circle cx="15" cy="15" r="5" fill="#4285f4"/></svg><i class="pip"></i></div>
      <div class="tb-w active"><svg class="tb-i" viewBox="0 0 22 22"><g fill="none" stroke="#1b78c8" stroke-width="3.200"><path d="M18 5A9 9 0 0 0 8 2.400"/><path d="M5 4.600A9 9 0 0 0 4.600 17"/><path d="M8 19.600A9 9 0 0 0 18 17"/></g></svg><i class="pip on"></i></div>
    </div>
    <div class="tray">
      <svg class="caret" viewBox="0 0 14 8"><path d="M1 7l6-6 6 6" fill="none" stroke="#222" stroke-width="1.500"/></svg>
      <span class="eng">ENG</span>
      <svg class="tr" viewBox="0 0 20 16"><path d="M1 5.500a13 13 0 0 1 18 0M4 8.500a9 9 0 0 1 12 0M7 11.500a5 5 0 0 1 6 0" fill="none" stroke="#222" stroke-width="1.300"/><circle cx="10" cy="14" r="1.400" fill="#222"/></svg>
      <svg class="tr" viewBox="0 0 20 16"><path d="M1 6h3l5-4v12l-5-4H1z" fill="none" stroke="#222" stroke-width="1.100"/><path d="M12 5q2 3 0 6M15 3q3 5 0 10M18 1.500q3 6.500 0 13" fill="none" stroke="#222" stroke-width="1.100"/></svg>
      <svg class="tr" viewBox="0 0 20 16"><rect x="1" y="4" width="16" height="9" rx="1.500" fill="#222"/><rect x="17.500" y="6.500" width="2" height="4" fill="#222"/><path d="M6 0L3 7h3l-2 5" fill="none" stroke="#e6eff9" stroke-width="1.200"/></svg>
      <div class="clock"><span>22:50</span><span>05.05.2024</span></div>
      <svg class="bell" viewBox="0 0 16 18"><path d="M8 1a5 5 0 0 1 5 5v5l2 3H1l2-3V6a5 5 0 0 1 5-5z" fill="#1660c8"/><path d="M5 15a3 3 0 0 0 6 0z" fill="#1660c8"/></svg>
      <div class="copilot"><svg viewBox="0 0 30 26"><path d="M2 16Q2 2 12 2h6l-4 16q-2 4-6 4H6q-4 0-4-6z" fill="#2ea9d8"/><path d="M14 2h5q9 0 9 12 0 6-4 8h-4q-6 0-6-6z" fill="#c46bd8"/><path d="M13 8h6l-3 10h-5z" fill="#f2d0e0"/></svg><span>PRE</span></div>
    </div>
  </div>

  <div class="watermark">
    <div class="wm-1">Активация Windows</div>
    <div class="wm-2">Чтобы активировать Windows, перейдите в раздел<br>"Параметры".</div>
  </div>
</div>
</body>
</html>
```
FILE: styles.css
```css
*{box-sizing:border-box}
html,body{margin:0;padding:0;height:100%;background:#000;overflow:hidden}
body{font-family:Inter,"Noto Sans",sans-serif;font-size:13px;color:#bdbdbd}
ul{list-style:none;margin:0;padding:0}
.defs{position:absolute;width:0;height:0}
.sv-a{font-family:"Liberation Serif",serif;font-size:21px;fill:#bcbcbc}
.sv-i{font-family:"Liberation Serif",serif;font-size:18px;font-weight:700;font-style:italic;fill:#2b6fd8;text-anchor:middle}

.screen{position:relative;width:1920px;height:1080px;display:flex;flex-direction:column;background:#000}
.app{height:1009px;margin:5px 5px 6px;display:flex;flex-direction:column;background:#2d2d30}

.menubar{height:37px;display:flex;align-items:center;background:#2d2d30;padding-left:4px}
.logo{width:22px;height:22px;margin-right:20px;flex:none}
.menu{display:flex;gap:20px;color:#bcbcbc;font-size:12px;white-space:nowrap}
.mb-right{margin-left:auto;display:flex;align-items:center;height:37px}
.mb-cloud{width:29px;height:22px;margin-right:10px}
.mb-cloud2{width:29px;height:22px;margin-right:23px}
.sim{width:128px;height:36px;margin-top:-1px;background:#232326;border-radius:0 0 3px 3px;display:flex;align-items:center;padding-left:13px;box-shadow:0 1px 0 #1a1a1a}
.sim-ch{width:13px;height:13px;margin-right:9px}
.sim-t{font-size:10px;font-weight:700;color:#d2d2d2;width:73px;letter-spacing:.1px}
.sim-c{width:0;height:0;border:4px solid transparent;border-top:5px solid #8a8a8a;margin-top:5px;margin-left:6px}
.win{display:flex;gap:9px;margin-left:20px;margin-right:17px}
.win svg{width:13px;height:13px}

.workspace{flex:1;min-height:0;display:flex}
.vtabs{width:25px;background:#1d1d1f;flex:none;margin-right:5px;display:flex;flex-direction:column}
.vtab{writing-mode:vertical-rl;font-size:13px;color:#a6a6a6;text-align:left;width:25px;display:flex;align-items:center}
.vt-a{height:86px;padding-top:15px;border-bottom:2px solid #555}
.vt-b{padding-top:13px}

.phead{height:20px;display:flex;align-items:center;background:#232326;font-size:12px;color:#a8a8a8;flex:none}
.ptitle{flex:1;text-align:center}
.pop{width:12px;height:12px;flex:none}
.arr{width:12px;height:12px;flex:none}

.library{width:196px;flex:none;display:flex;flex-direction:column;margin-right:5px;background:#2d2d30}
.lib-head{padding:0 4px 0 5px;border-bottom:1px solid #1d1d1f}
.lib-tabs{height:28px;display:flex;background:#2a2a2d;border-bottom:1px solid #161618;flex:none}
.ltab{width:32px;display:flex;align-items:center;justify-content:center;border-right:1px solid #161618}
.ltab.on{background:linear-gradient(#4a4a4d,#2d2d30)}
.ltab svg{width:17px;height:17px}
.lib-tools{height:26px;margin-top:3px;display:flex;align-items:center;justify-content:flex-end;gap:7px;padding-right:12px;position:relative;flex:none}
.lib-tools svg{width:13px;height:13px}
.lib-tools .vl{width:1px;height:14px;background:#3c3c3f;margin:0}
.nb{display:inline-flex;align-items:center;justify-content:center;width:9px;height:9px;border-radius:50%;background:#3fa3dc;color:#173347;font-size:7px;font-weight:700;margin-left:5px;line-height:1}
.nb-top{position:absolute;left:106px;top:3px}
.lib-tree{flex:none}
.lib-tree li{height:24px;display:flex;align-items:center;padding-left:9px;margin-left:8px;color:#b4b4b4;font-size:12px;white-space:nowrap;position:relative}
.lib-tree li:first-child{margin-top:-2px}
.lib-tree i{width:16px;display:block;flex:none;height:10px}
.lib-tree i.ar{height:0;border:4px solid transparent;border-left:6px solid #bdbdbd;margin-right:6px;box-sizing:content-box;width:0}
.lib-tree li.sel{background:#343a44}
.clip{overflow:hidden;white-space:nowrap}
.lib-lower{flex:1;margin-top:15px;background:#242426;display:flex;flex-direction:column;min-height:0}
.searchrow{height:29px;margin-bottom:7px;display:flex;align-items:center;padding-left:5px;flex:none}
.sinput{width:105px;height:19px;background:#1e1e20;border:1px solid #3a3a3c}
.searchrow svg{width:13px;height:13px}
.searchrow svg:nth-of-type(1){margin-left:5px}
.searchrow svg:nth-of-type(2){margin-left:16px}
.searchrow svg:nth-of-type(3){margin-left:7px}
.dd{width:0;height:0;border:3px solid transparent;border-top:5px solid #ccc;margin-left:9px;margin-top:4px}
.colhead{height:26px;background:#1c1c1e;display:flex;align-items:center;justify-content:center;font-size:12.500px;color:#cfcfcf;flex:none;padding-left:36px}
.files{margin-top:3px}
.files li{height:27px;display:flex;align-items:center;color:#b8b8b8;font-size:12px;white-space:nowrap;padding-left:28px;overflow:hidden}
.files svg{width:18px;height:24px;flex:none;margin-right:8px}
.files li.sel{background:#363e4a}
.f2{--top:#777;--head:#888;--leg:#b0907c}
.f3{--top:#4a2f28;--head:#6a4a3a;--leg:#33241f}
.f4{--top:#c45a5a;--head:#c9a08a;--leg:#2f4a30}

.view{width:1334px;flex:none;display:flex;flex-direction:column;margin-right:5px}
.view-head{padding:0 2px 0 0}
.view-head .ptitle{padding-right:4px;font-size:11.700px}
.view-body{flex:1;display:flex;min-height:0}
.canvas{width:1259px;flex:none;position:relative;border:2px solid #dedede;background-color:#c8c8c8;background-image:linear-gradient(#bfbfbf 1px,transparent 1px),linear-gradient(90deg,#bfbfbf 1px,transparent 1px);background-size:14px 14px;overflow:hidden}
.pattern{position:absolute;left:-2px;top:-2px;width:1259px;height:925px;display:block}
.ghost{fill:#bebebe}
.body-fill,.bf{fill:#5a595a}
.sl-blue{fill:none;stroke:#7db0da;stroke-width:5}
.sl-black{fill:none;stroke:#26262b;stroke-width:1.200}
.sl-green{fill:none;stroke:#71b24a;stroke-width:1.200}
.sl-tl{fill:none;stroke:#4a62b8;stroke-width:1}
.sl-tt{fill:none;stroke:#7db0da;stroke-width:4}
.hdash{fill:none;stroke:#7872a6;stroke-width:1.300;stroke-dasharray:2.500 2.500}
.red{fill:#f00000}
.sq-b{fill:none;stroke:#3e58b8;stroke-width:3}
.sq-t{fill:none;stroke:#3f93b4;stroke-width:2}
.sq-g{fill:none;stroke:#6faf3e;stroke-width:3}
.sq-y{fill:#fff;stroke:#f8ee1a;stroke-width:3}
.sq-in{fill:#333}
.sq-blue{fill:none;stroke:#3e58b8;stroke-width:1.500}
.yd{fill:#f8ee1a}
.pal-l{--g:#6fb23f;--t:#3f98b8;--b:#3f55b5;--k:#2a2a2e;--kf:#2e2e2e}
.pal-r{--g:#bcdca8;--t:#b0d8ea;--b:#abb7e6;--k:#8a8a8a;--kf:#8f8f8f}
.lk{fill:none;stroke:var(--k);stroke-width:1.300}
.lb{fill:none;stroke:var(--b);stroke-width:1}
.lt{fill:none;stroke:var(--t);stroke-width:1}
.lg{fill:none;stroke:var(--g);stroke-width:1.300}
.db{fill:var(--b,#3f55b5)}
.dt{fill:var(--t,#3f98b8)}
.dk{fill:var(--kf,#2e2e2e)}
.dg{fill:var(--g,#6fb23f)}
.db-s{fill:#3f55b5}
.dt-s{fill:#3f98b8}
.dt-g{fill:#84b84f}
.dg-o{fill:#5a595a;stroke:#8dbb68;stroke-width:1}
.sm-g{fill:none;stroke:#84b84f;stroke-width:1.200}
.cl-blue{stroke:#6fb2e2;stroke-width:2.500}
.cl-black{stroke:#0c0c0c;stroke-width:2.500;stroke-dasharray:3 3}
.collar{fill:#5a595a;stroke:#2a2a2e;stroke-width:1.200}
.tip{font-family:Lato,"Noto Sans",sans-serif;font-size:10.700px;fill:#1e1e1e}
.pill{position:absolute;left:10px;top:8px;width:32px;height:156px;background:#4a4a4c;border-radius:8px;display:flex;flex-direction:column;align-items:center;justify-content:space-between;padding:5px 0}
.pill svg{width:26px;height:26px}

.toolcols{display:flex;flex:1;min-width:0}
.toolcol{flex:none;display:flex;flex-direction:column;align-items:center;border-right:1px solid #232326}
.tc-l{width:38px}
.tc-r{width:37px;padding-left:2px}
.tool{width:34px;height:32px;flex:none;display:block}
.tool.active{background:#141416;border-radius:4px;border:1px solid #000}
.tool.short{height:18px}
.tsep{width:28px;height:1px;border:0;background:#161618;margin:11px 0 6px;flex:none}
.tsep.first{margin:6px 0 7px}
.tc-r .tsep.first{margin:6px 0 5px}

.rightcol{flex:1;min-width:0;display:flex;flex-direction:column}
.objects{height:382px;flex:none;background:#2d2d30;border-bottom:1px solid #1c1c1e;border-left:1px solid #1c1c1e;position:relative}
.props{flex:1;margin-top:5px;background:#2d2d30;border-left:1px solid #1c1c1e;border-bottom:1px solid #1c1c1e;margin-bottom:1px}
.obj-head{padding:0 5px 0 4px}
.obj-head .arr{border-right:1px solid #3c3c3f;width:14px;padding-right:2px}
.obj-icons{height:27px;display:flex;background:#2a2a2d;padding-left:1px;align-items:center;border-bottom:1px solid #222;position:relative}
.obj-icons svg{width:34px;height:21px;flex:none;padding:0}
.obj-icons::after{content:"";position:absolute;left:271px;bottom:-1px;width:34px;height:1px;background:#5aa7dd}
.subtabs{display:flex;width:184px;height:28px;background:#232328;margin:23px 0 0 20px}
.subtabs span{width:92px;display:flex;align-items:center;justify-content:center;font-size:13px;color:#c8c8c8}
.subtabs .on{color:#5aa7dd;border-bottom:1px solid #5aa7dd}
.obj-btns{display:flex;justify-content:flex-end;gap:3px;padding-right:16px;margin-top:15px}
.btn{height:26px;width:85px;border:0;background:#333336;color:#c8c8c8;font:12.500px Inter,"Noto Sans",sans-serif;display:flex;align-items:center;justify-content:center;padding:0;border-radius:3px}
.btn b{font-size:20px;font-weight:400;margin-right:2px;color:#ddd;line-height:1}
.btn.off{width:67px;color:#4c4c4c;background:#303033}
.btn.off svg{width:14px;height:14px;margin-right:3px}
.sizes{margin-top:16px;padding-left:29px;position:relative}
.sizes::before{content:"";position:absolute;left:57px;top:20px;height:70px;width:1px;border-left:1px dotted #9a9a9a}
.s-row{height:20px;display:flex;align-items:center;color:#c4c4c4;font-size:13px;position:relative}
.s-row:not(.s-top)::before{content:"";position:absolute;left:28px;width:15px;border-top:1px dotted #9a9a9a;top:10px}
.minus{width:9px;height:9px;margin-right:14px;flex:none}
.s-name{width:51px;margin-left:48px;flex:none}
.s-name.top{width:auto;margin-left:0}
.s-acts{margin-left:auto;display:flex;gap:8px;margin-right:22px}
.s-acts svg{width:12px;height:12px}
.sw{width:12px;height:12px;flex:none;margin-right:7px}
.c-s{background:#7db53c}
.c-m{background:#3fb97a}
.c-l{background:#3b93b5}
.c-xl{background:#3f5ab5}
.eye{width:13px;height:10px;flex:none;margin-right:8px}
.ck{width:11px;height:11px;background:#555;border:1px solid #6c6c6c;flex:none;position:relative;display:block}
.ck.on::after{content:"";position:absolute;left:2px;top:0;width:5px;height:7px;border:solid #4db3ee;border-width:0 2px 2px 0;transform:rotate(40deg)}
.s-base{margin-left:11px;width:92px;flex:none}
.s-lk{display:flex;gap:6px;margin-left:9px}
.s-lk svg{width:12px;height:14px}
.ghosted{visibility:hidden}

.sect{height:23px;display:flex;align-items:center;color:#5aaed8;font-size:13px;padding-left:12px}
.sect span{margin-left:7px;flex:1;border-bottom:1px solid #232326;height:23px;line-height:23px;margin-right:6px}
.sect-ar{width:0;height:0;border:4.500px solid transparent;border-top:6px solid #c8c8c8;margin-top:5px}
.gt{width:280px;margin-left:47px;position:relative;border:1px solid #1a1a1c;border-right-color:#3a3a3c;border-bottom-color:#3a3a3c;overflow:hidden}
.gt-d{height:192px}
.gt-o{height:191px}
.gt-main{width:270px;overflow:hidden}
.gr{display:flex;height:37px;border-bottom:1px solid #3c3c3f;color:#cfcfcf;font-size:13px}
.gr span{width:125px;flex:none;display:flex;align-items:center;padding-left:4px;border-left:1px solid #3c3c3f}
.gr span:first-child{width:36px;padding-left:5px;border-left:0;border-right:1px solid #1a1a1c;padding-top:2px;color:#c8c8c8;box-shadow:inset 0 -1px 0 #1a1a1c}
.gr span:nth-child(2){border-left:0}
.gt-o .gr span:first-child{width:64px}
.gh{height:36px;border-bottom:1px solid #1a1a1c}
.gh span{justify-content:center;padding:0;white-space:nowrap;border-left:1px solid #1a1a1c}
.gh span:nth-child(2){border-left:0}
.dim span{color:#787878}
.dim span:first-child{color:#c8c8c8}
.lastr{border-bottom:0;height:34px}
.lastr span{padding-top:3px}
.lastr span:first-child{box-shadow:none;padding-top:4px}
.vsb{position:absolute;right:0;top:0;bottom:10px;width:10px;background:#2a2a2d}
.vsb i{position:absolute;left:0;top:15px;width:10px;height:113px;border:1px solid #4a4a4c;background:#2d2d30;border-radius:2px}
.vsb::after{content:"";position:absolute;left:0;top:128px;bottom:13px;width:10px;background:#1b1b1d}
.hsb{position:absolute;left:13px;right:23px;bottom:0;height:10px;background:#1b1b1d}
.hsb i{position:absolute;left:0;top:0;width:119px;height:10px;background:#2f2f32;border:1px solid #4a4a4c;border-radius:3px}
.stepr{display:flex;align-items:center;height:30px;margin-top:1px;margin-left:27px;margin-right:7px;border-bottom:1px solid #3a3a3c;color:#c0c0c0;font-size:12px}
.st-l{width:202px;white-space:nowrap;overflow:hidden}
.st-in{width:83px;height:22px;background:#242426;border-radius:3px;display:flex;align-items:center;padding-left:10px;margin-right:5px;color:#c8c8c8}
.stepr svg{width:13px;height:13px}

.status{height:27px;flex:none;display:flex;align-items:center;padding:0 13px 0 10px;background:#2d2d30}
.ver{font-size:11px;color:#a8a8a8}
.st-icons{margin-left:auto;display:flex;align-items:center}
.st-split{width:14px;height:10px}
.st-b{width:14px;height:10px;background:#c4c4c4;color:#2d2d30;font-size:8px;font-weight:700;display:flex;align-items:center;justify-content:center;margin-left:10px;border-radius:1px}
.st-ref{width:14px;height:14px;margin-left:15px}

.taskbar{height:60px;flex:none;display:flex;align-items:center;position:relative;border-top:1px solid #c5d0da;background:linear-gradient(90deg,#e6f0f9,#dfeaf9 30%,#d3e0f6 45%,#dce8f7 65%,#e6f0f9 85%,#e9f2fa);color:#1a1a1a;font-family:"Noto Sans",sans-serif}
.weather{display:flex;align-items:center;padding-left:24px;width:680px;flex:none}
.weather svg{width:32px;height:30px;margin-right:8px}
.w-t{display:flex;flex-direction:column;font-size:14.300px;line-height:20px;padding-bottom:2px}
.w-s{color:#444}
.tb-center{display:flex;align-items:center;height:60px}
.tb-i{width:30px;height:30px;flex:none;display:block}
.start{margin:0 18px 0 6px}
.search{width:123px;height:37px;background:#f6f9fd;border-radius:19px;display:flex;align-items:center;justify-content:center;gap:6px;font-size:15px;margin-right:17px;box-shadow:0 0 1px #b8c4d4}
.search svg{width:16px;height:16px}
.tb-center>svg:nth-of-type(2){margin-right:26px}
.tb-center>svg:nth-of-type(3){margin-right:25px}
.tb-center>svg:nth-of-type(4){margin-right:12px}
.tb-w{width:55px;height:48px;display:flex;flex-direction:column;align-items:center;justify-content:center;position:relative;border-radius:5px}
.tb-w.active{width:48px;background:#eef4fb;border:1px solid #d8e3f0;margin-left:5px}
.tb-w .tb-i{margin-top:-2px}
.tb-w.active .tb-i{width:26px;height:26px}
.pip{position:absolute;bottom:0;left:50%;margin-left:-3px;width:6px;height:3px;background:#7a808a;border-radius:2px}
.pip.on{width:20px;margin-left:-10px;background:#1b78c8;bottom:1px}
.tray{margin-left:auto;display:flex;align-items:center;height:60px;padding-right:25px}
.caret{width:14px;height:8px;margin-right:27px}
.eng{font-size:14px;margin-right:22px}
.tr{width:21px;height:17px;margin-right:9px}
.clock{display:flex;flex-direction:column;align-items:flex-end;font-size:14px;line-height:20px;margin-left:11px;margin-right:11px}
.bell{width:16px;height:19px;margin-right:23px}
.copilot{position:relative;width:30px;height:30px}
.copilot svg{width:30px;height:26px}
.copilot span{position:absolute;right:-2px;bottom:-3px;background:#f2b632;color:#222;font-size:8px;font-weight:700;padding:0 2px;line-height:10px;border-radius:2px}

.watermark{position:absolute;left:1422px;top:891px;color:rgba(130,130,130,.7);font-family:"Noto Sans",sans-serif;pointer-events:none}
.wm-1{font-size:24px;line-height:32px}
.wm-2{font-size:17px;line-height:26px;margin-top:1px}
```
